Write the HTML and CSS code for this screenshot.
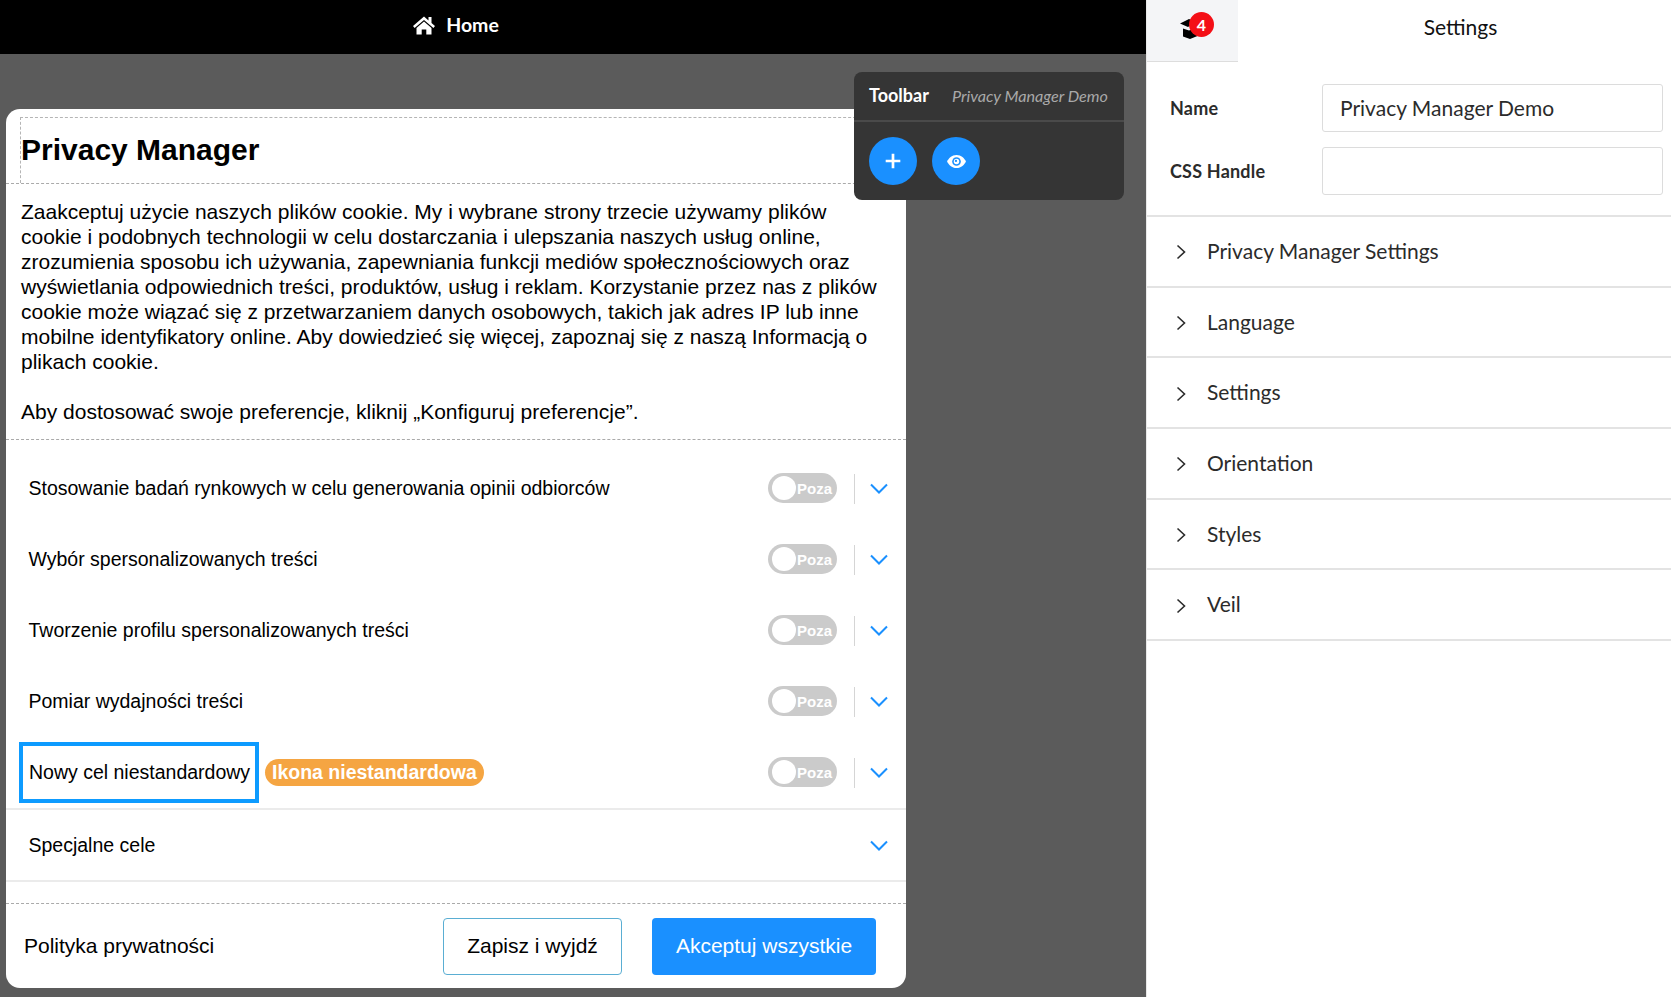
FILE: index.html
```html
<!DOCTYPE html>
<html lang="pl">
<head>
<meta charset="utf-8">
<title>Privacy Manager</title>
<link rel="stylesheet" href="styles.css">
</head>
<body>
<div class="app">
  <main class="stage">
    <header class="topbar">
      <svg class="home-icon" viewBox="0 0 24 20" width="24" height="20"><path d="M12 1.500 1 11l1.600 1.900L12 5l9.400 7.900L23 11l-3.500-3V2h-3v3.400z" fill="#fff"/><path d="M12 6.600 4.500 13v6.400h5.200v-5h4.600v5h5.200V13z" fill="#fff"/></svg>
      <span class="home-label">Home</span>
    </header>
    <div class="canvas">
      <section class="modal">
        <div class="title-zone"><h1 class="title">Privacy Manager</h1></div>
        <div class="copy">
          <p>Zaakceptuj użycie naszych plików cookie. My i wybrane strony trzecie używamy plików cookie i podobnych technologii w celu dostarczania i ulepszania naszych usług online, zrozumienia sposobu ich używania, zapewniania funkcji mediów społecznościowych oraz wyświetlania odpowiednich treści, produktów, usług i reklam. Korzystanie przez nas z plików cookie może wiązać się z przetwarzaniem danych osobowych, takich jak adres IP lub inne mobilne identyfikatory online. Aby dowiedzieć się więcej, zapoznaj się z naszą Informacją o plikach cookie.</p>
          <p>Aby dostosować swoje preferencje, kliknij „Konfiguruj preferencje”.</p>
        </div>
        <div class="rows">
          <div class="row"><span class="row-label">Stosowanie badań rynkowych w celu generowania opinii odbiorców</span><span class="toggle"><i class="knob"></i>Poza</span><i class="sep"></i><svg class="chev" viewBox="0 0 18 11" width="18" height="11"><path d="M1 1.500 9 9.500l8-8" fill="none" stroke="#1a90ff" stroke-width="2"/></svg></div>
          <div class="row"><span class="row-label">Wybór spersonalizowanych treści</span><span class="toggle"><i class="knob"></i>Poza</span><i class="sep"></i><svg class="chev" viewBox="0 0 18 11" width="18" height="11"><path d="M1 1.500 9 9.500l8-8" fill="none" stroke="#1a90ff" stroke-width="2"/></svg></div>
          <div class="row"><span class="row-label">Tworzenie profilu spersonalizowanych treści</span><span class="toggle"><i class="knob"></i>Poza</span><i class="sep"></i><svg class="chev" viewBox="0 0 18 11" width="18" height="11"><path d="M1 1.500 9 9.500l8-8" fill="none" stroke="#1a90ff" stroke-width="2"/></svg></div>
          <div class="row"><span class="row-label">Pomiar wydajności treści</span><span class="toggle"><i class="knob"></i>Poza</span><i class="sep"></i><svg class="chev" viewBox="0 0 18 11" width="18" height="11"><path d="M1 1.500 9 9.500l8-8" fill="none" stroke="#1a90ff" stroke-width="2"/></svg></div>
          <div class="row row-custom"><span class="row-label focus">Nowy cel niestandardowy</span><span class="badge">Ikona niestandardowa</span><span class="toggle"><i class="knob"></i>Poza</span><i class="sep"></i><svg class="chev" viewBox="0 0 18 11" width="18" height="11"><path d="M1 1.500 9 9.500l8-8" fill="none" stroke="#1a90ff" stroke-width="2"/></svg></div>
          <div class="row row-special"><span class="row-label">Specjalne cele</span><svg class="chev" viewBox="0 0 18 11" width="18" height="11"><path d="M1 1.500 9 9.500l8-8" fill="none" stroke="#1a90ff" stroke-width="2"/></svg></div>
        </div>
        <footer class="modal-foot">
          <span class="policy">Polityka prywatności</span>
          <button class="btn btn-save">Zapisz i wyjdź</button>
          <button class="btn btn-accept">Akceptuj wszystkie</button>
        </footer>
      </section>
      <aside class="toolbar">
        <div class="toolbar-head"><span class="toolbar-title">Toolbar</span><span class="toolbar-sub">Privacy Manager Demo</span></div>
        <div class="toolbar-body">
          <span class="round"><svg viewBox="0 0 16 16" width="18" height="18"><path d="M8 1.500v13M1.500 8h13" stroke="#fff" stroke-width="2.400" fill="none"/></svg></span>
          <span class="round"><svg viewBox="0 0 22 16" width="21" height="15"><path d="M11 1C6 1 2.400 4.600 1 8c1.400 3.400 5 7 10 7s8.600-3.600 10-7c-1.400-3.400-5-7-10-7z" fill="#fff"/><circle cx="11" cy="8" r="4.600" fill="#1a90ff"/><circle cx="11" cy="8" r="2.900" fill="#fff"/><circle cx="10.400" cy="7.400" r="1.200" fill="#1a90ff"/></svg></span>
        </div>
      </aside>
    </div>
  </main>
  <aside class="panel">
    <div class="panel-top">
      <div class="tab">
        <svg viewBox="0 0 24 20" width="24" height="20"><path d="M0 4.500 9 0l7 3-8 5z M3 9.500l6 2 11-4V16l-10 4-7-2.500z" fill="#000"/></svg>
        <span class="count">4</span>
      </div>
      <div class="panel-title">Settings</div>
    </div>
    <div class="fields">
      <label class="field"><span class="field-label">Name</span><span class="input">Privacy Manager Demo</span></label>
      <label class="field"><span class="field-label">CSS Handle</span><span class="input"></span></label>
    </div>
    <div class="section"><svg viewBox="0 0 10 16" width="10" height="16"><path d="M1.500 1.500 8.500 8l-7 6.500" fill="none" stroke="#2b2b2b" stroke-width="1.600"/></svg><span>Privacy Manager Settings</span></div>
    <div class="section"><svg viewBox="0 0 10 16" width="10" height="16"><path d="M1.500 1.500 8.500 8l-7 6.500" fill="none" stroke="#2b2b2b" stroke-width="1.600"/></svg><span>Language</span></div>
    <div class="section"><svg viewBox="0 0 10 16" width="10" height="16"><path d="M1.500 1.500 8.500 8l-7 6.500" fill="none" stroke="#2b2b2b" stroke-width="1.600"/></svg><span>Settings</span></div>
    <div class="section"><svg viewBox="0 0 10 16" width="10" height="16"><path d="M1.500 1.500 8.500 8l-7 6.500" fill="none" stroke="#2b2b2b" stroke-width="1.600"/></svg><span>Orientation</span></div>
    <div class="section"><svg viewBox="0 0 10 16" width="10" height="16"><path d="M1.500 1.500 8.500 8l-7 6.500" fill="none" stroke="#2b2b2b" stroke-width="1.600"/></svg><span>Styles</span></div>
    <div class="section"><svg viewBox="0 0 10 16" width="10" height="16"><path d="M1.500 1.500 8.500 8l-7 6.500" fill="none" stroke="#2b2b2b" stroke-width="1.600"/></svg><span>Veil</span></div>
  </aside>
</div>
</body>
</html>
```
FILE: styles.css
```css
* { box-sizing: border-box; }
html, body { margin: 0; height: 100%; overflow: hidden; }
body { font-family: "Liberation Sans", Arial, sans-serif; background: #5b5b5b; }
.app { display: flex; height: 997px; width: 1671px; }

.stage { width: 1146px; flex: none; display: flex; flex-direction: column; background: #5b5b5b; }
.topbar { height: 54px; flex: none; background: #000; display: flex; align-items: center; justify-content: center; gap: 10px; padding-bottom: 5px; padding-right: 235px; }
.home-label { font-family: Lato, sans-serif; font-weight: 700; font-size: 19.500px; color: #fff; }
.canvas { position: relative; flex: 1; padding: 55px 0 0 6px; }

.modal { width: 900px; height: 879px; background: #fff; border-radius: 14px; display: flex; flex-direction: column; overflow: hidden; }
.title-zone { height: 66px; margin-top: 8px; margin-left: 14px; border-top: 1px dashed #b5b5b5; border-left: 1px dashed #b5b5b5; display: flex; align-items: center; flex: none; }
.title { margin: 0 0 2px; font-size: 30px; line-height: 34px; font-weight: 700; color: #000; }
.copy { border-top: 1px dashed #aaa; border-bottom: 1px dashed #aaa; padding: 15px 26px 12px 15px; flex: none; height: 257px; font-size: 21px; line-height: 25px; color: #000; }
.copy p { margin: 0 0 25px; }
.copy p:last-child { margin: 0; }
.rows { flex: none; padding-top: 13px; }
.row { height: 71px; display: flex; align-items: center; padding: 0 18px 0 22.500px; font-size: 19.500px; color: #000; }
.row-label { margin-right: auto; }
.row-custom { border-bottom: 2px solid #ebebeb; height: 73px; }
.row-custom .row-label { margin-right: 6px; }
.row-special { height: 72px; border-bottom: 2px solid #ebebeb; }
.focus { border: 4px solid #0d9bff; width: 240px; height: 61px; margin-left: -9.500px; padding-left: 6px; display: flex; align-items: center; white-space: nowrap; }
.badge { height: 27px; margin-right: auto; padding: 0 7px; border-radius: 14px; background: #f5a542; color: #fff; font-weight: 700; font-size: 19.500px; line-height: 27px; }
.toggle { width: 69px; height: 30px; margin-bottom: 1px; border-radius: 15px; background: #cbcbcb; display: flex; align-items: center; justify-content: flex-end; padding-right: 5px; color: #fff; font-weight: 700; font-size: 15px; position: relative; }
.knob { position: absolute; left: 4px; top: 3px; width: 24px; height: 24px; border-radius: 50%; background: #fff; }
.sep { width: 1px; height: 30px; background: #d5d5d5; margin: 0 15px 0 17px; }
.chev { flex: none; }
.modal-foot { margin-top: 21px; border-top: 1px dashed #aaa; flex: 1; display: flex; align-items: center; padding: 1px 30px 0 18px; font-size: 21px; }
.policy { margin: 0 auto 2px 0; color: #000; }
.btn { height: 57px; border-radius: 4px; font: inherit; display: block; padding: 0 0 2px; }
.btn-save { width: 179px; background: #fff; border: 1px solid #5aaed3; color: #000; margin-right: 30px; }
.btn-accept { width: 224px; background: #1a90ff; border: 0; color: #fff; }

.toolbar { position: absolute; left: 854px; top: 18px; width: 270px; height: 128px; background: #353535; border-radius: 8px; }
.toolbar-head { height: 50px; border-bottom: 2px solid #4a4a4a; display: flex; align-items: center; justify-content: space-between; padding: 0 16px 2px 15px; }
.toolbar-title { font-family: Lato, sans-serif; font-weight: 700; font-size: 18px; color: #fff; }
.toolbar-sub { font-family: Lato, sans-serif; font-style: italic; font-size: 16.200px; color: #a9a9a9; }
.toolbar-body { display: flex; gap: 15px; padding: 15px 15px; }
.round { width: 48px; height: 48px; border-radius: 50%; background: #1a90ff; display: flex; align-items: center; justify-content: center; }

.panel { flex: 1; background: #fff; border-left: 1px solid #e8e8e8; font-family: Lato, sans-serif; color: #2b2b2b; }
.panel-top { display: flex; height: 62px; }
.tab { width: 91px; flex: none; background: #f4f5f7; border-bottom: 1px solid #ddd; position: relative; display: flex; align-items: center; justify-content: center; padding: 0 2px 4px 0; }
.count { position: absolute; left: 42px; top: 12px; width: 25px; height: 25px; border-radius: 50%; background: #f40f16; color: #fff; font-size: 16px; font-weight: 700; display: flex; align-items: center; justify-content: center; }
.panel-title { flex: 1; text-align: center; font-size: 21px; line-height: 54px; color: #111; padding-left: 12px; }
.fields { height: 155px; padding: 22px 8px 0 23px; border-bottom: 2px solid #e3e3e3; display: flex; flex-direction: column; gap: 15px; }
.field { display: flex; align-items: center; }
.field-label { width: 152px; flex: none; font-size: 18px; letter-spacing: .2px; font-weight: 700; }
.input { flex: 1; height: 48px; border: 1px solid #dcdcdc; border-radius: 3px; padding: 0 17px; font-size: 21px; line-height: 45px; color: #2b2b2b; }
.section { height: 70.700px; border-bottom: 2px solid #e3e3e3; display: flex; align-items: center; gap: 21px; padding: 0 0 2px 29px; font-size: 21px; }
.section svg { flex: none; margin-top: 4px; }
```
